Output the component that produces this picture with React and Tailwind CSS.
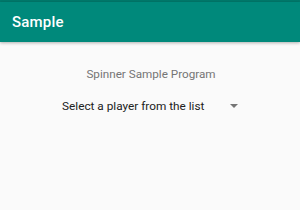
export default function App() {
  return (
    <div className="w-[300px] h-[210px] bg-[#fafafa] flex flex-col overflow-hidden" style={{ fontFamily: "Roboto, 'Noto Sans', sans-serif" }}>
      <div className="h-[2px] bg-[#00796b]" />
      <div className="h-[40px] bg-[#00897b] flex items-center px-3 pt-[1px] shadow-[0_1px_3px_rgba(0,0,0,0.3)] relative z-10">
        <span className="text-white text-[15px] font-medium tracking-[0.2px]">Sample</span>
      </div>
      <div className="flex flex-col pt-[24px]">
        <div className="text-[11.7px] text-[#757575] leading-[16px] text-center pl-[2px]">Spinner Sample Program</div>
        <div className="mt-[16px] ml-[62px] w-[177px] flex items-center justify-between">
          <span className="text-[11.8px] text-[#212121] leading-[16px]">Select a player from the list</span>
          <svg width="8" height="4" viewBox="0 0 8 4" className="mr-[1px]">
            <path d="M0 0 L8 0 L4 4 Z" fill="#757575" />
          </svg>
        </div>
      </div>
    </div>
  );
}
